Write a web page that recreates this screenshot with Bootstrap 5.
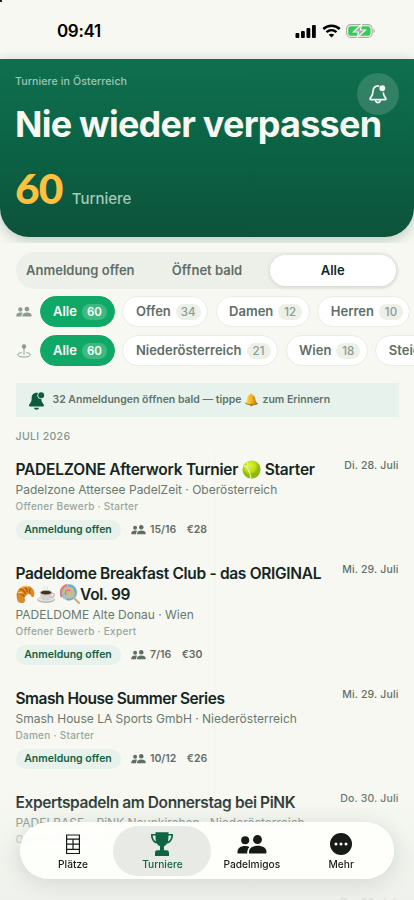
<!DOCTYPE html>
<html lang="de">
<head>
<meta charset="utf-8">
<meta name="viewport" content="width=device-width, initial-scale=1">
<title>Turniere in Österreich</title>
<link href="https://cdn.jsdelivr.net/npm/bootstrap@5.3.0/dist/css/bootstrap.min.css" rel="stylesheet">
<style>
  body { background:#f7f8f2; font-family:Inter,"Liberation Sans",sans-serif; color:#14261f; }
  .phone { width:414px; height:900px; background:#f7f8f2; }
  .corner-dot { width:2px; height:1.5px; background:#222; left:0; top:0; }
  .statusbar { height:58px; padding:4px 38px 0 57px; }
  .clock { font-size:17px; font-weight:600; color:#000; letter-spacing:-.35px; line-height:20px; }
  .hero-wrap { height:209px; margin-top:-24px; padding-top:24.5px; margin-bottom:9px; }
  .hero { height:178.5px; background:linear-gradient(#0f704e,#0b6245 52%,#0d533b); border-radius:0 0 29px 29px; box-shadow:0 3px 14px rgba(13,83,59,.27); padding:15px 15px 0; }
  .eyebrow { font-size:10.6px; line-height:16px; font-weight:500; color:#a0c6b6; letter-spacing:.1px; }
  .headline { font-size:36px; line-height:42px; font-weight:700; color:#f7f8f2; margin:13px 0 0; white-space:nowrap; letter-spacing:-.77px; }
  .hero-total { margin-top:21px; gap:9px; }
  .total { font-family:Lato,Inter,sans-serif; font-size:42.5px; line-height:44px; font-weight:900; color:#fdc13d; letter-spacing:-.8px; }
  .total-label { font-size:15px; line-height:20px; font-weight:500; color:#a6c9ba; }
  .bell-btn { width:42px; height:42px; right:15px; top:73px; background:rgba(255,255,255,.15); }
  .segments { height:37px; margin:0 15.5px; background:#edf0e9; padding:3px; font-size:13px; font-weight:600; color:#5f6e66; }
  .segments .seg { width:126px; height:31px; }
  .segments .seg:first-child { padding-right:2px; }
  .seg-active { background:#fff; color:#14261f; box-shadow:0 1px 4px rgba(20,60,40,.16); }
  .chips { height:31px; padding-left:16px; gap:7.5px; font-size:13px; font-weight:600; }
  .chips-first { margin-top:7px; }
  .chip-icon { width:16px; height:16px; color:#8c9b91; }
  .chip { height:31px; padding:0 6.5px 0 12.5px; gap:5px; background:#fff; border:1px solid #e9ece5; color:#5f6e66; white-space:nowrap; }
  .chip-on { background:#10a866; border-color:#10a866; color:#fff; padding-right:7px; }
  .count { font-size:11.5px; line-height:16px; min-width:24px; padding:0 5px; text-align:center; font-weight:500; background:#edf0e9; color:#8c9b91; }
  .chip-on .count { background:#3eb982; color:#fff; font-weight:600; }
  .notice { height:34px; margin:17px 15px 0 15.5px; padding-left:12px; background:#e7f2ec; font-size:10.5px; font-weight:600; color:#61736a; }
  .month { font-size:10.5px; line-height:14px; font-weight:500; color:#86968d; letter-spacing:.35px; margin:13px 15.5px 15px; }
  .event { padding:0 15.5px 23px; }
  .event-title { font-size:15.5px; line-height:21px; font-weight:600; color:#14261f; letter-spacing:-.4px; white-space:nowrap; margin:0 0 1px; }
  .event-title.t1 { letter-spacing:-.21px; }
  .event-title.t2 { letter-spacing:-.32px; }
  .event-title.t3 { letter-spacing:-.48px; }
  .date { font-size:10.5px; line-height:13px; font-weight:500; color:#5f6e66; letter-spacing:.15px; white-space:nowrap; }
  .place { font-size:12px; line-height:17px; color:#687970; white-space:nowrap; margin-bottom:1px; }
  .level { font-size:10px; line-height:14px; font-weight:500; color:#98a69d; letter-spacing:.27px; }
  .facts { margin-top:7px; font-size:10.5px; font-weight:600; color:#5f6e66; height:20px; }
  .facts .fee { margin-left:10.5px; }
  .state { width:105px; height:20px; line-height:20px; background:#e7f2ec; color:#135f43; text-align:center; margin-right:10.5px; font-size:10.5px; }
  .emo { vertical-align:-4px; }
  .cup { margin-left:2px; }
  .lolly { margin-left:1px; }
  .fold { width:1px; left:214px; top:450px; bottom:78px; background:rgba(20,60,40,.025); }
  .haze { left:0; right:0; bottom:0; height:110px; background:linear-gradient(rgba(246,247,242,0),rgba(238,241,235,.7) 60%,rgba(238,240,235,.86)); }
  .tabs { left:20px; top:822px; width:374px; height:57px; padding:4px; background:rgba(254,255,252,.94); box-shadow:0 4px 22px rgba(20,50,35,.13); backdrop-filter:blur(2px); }
  .tab-item { width:98px; height:50px; color:#171b18; font-size:10.2px; line-height:12px; font-weight:500; padding-top:5px; gap:1px; margin-right:-8.6px; }
  .tab-item svg { height:26px; }
  .tab-on { background:#e8eae5; color:#0d6545; }
</style>
</head>
<body>
<svg width="0" height="0" class="position-absolute" aria-hidden="true">
  <symbol id="people" viewBox="0 0 30 20">
    <circle cx="8.2" cy="5.3" r="4"/><path d="M.5 18.5V17c0-4 3.2-6 7.7-6 1.8 0 3.2.3 4.3.9-1.700 1.500-2.300 3.500-2.300 6.600z"/>
    <circle cx="20.500" cy="4.600" r="4.500"/><path d="M12 18.500V17c0-4 3.700-6.200 8.700-6.200s8.800 2.200 8.800 6.200c0 1-.4 1.500-1.300 1.500z"/>
  </symbol>
  <symbol id="bell-fill" viewBox="0 0 20 22">
    <path d="M10 2c-3.500 0-5.700 2.500-5.700 6.200 0 4.500-1 5.500-2.800 7.400-.8.900-.3 2.400 1.100 2.400h14.800c1.400 0 1.900-1.500 1.100-2.400-1.800-1.900-2.800-2.900-2.800-7.400C15.700 4.500 13.500 2 10 2z"/><path d="M7 19.500h6c-.3 1.500-1.500 2.300-3 2.300s-2.700-.8-3-2.300z"/>
    <circle cx="15.500" cy="4.800" r="4.500" fill="#e7f2ec"/><circle cx="15.500" cy="4.800" r="3.500"/>
  </symbol>
</svg>

<div class="phone position-relative overflow-hidden">
  <div class="corner-dot position-absolute"></div>
  <header class="statusbar d-flex align-items-center justify-content-between">
    <div class="clock">09:41</div>
    <div class="d-flex align-items-center">
      <svg width="22" height="13" viewBox="0 0 22 13"><rect x=".5" y="8" width="3.800" height="5" rx="1"/><rect x="6" y="6" width="3.800" height="7" rx="1"/><rect x="11.500" y="3" width="3.800" height="10" rx="1"/><rect x="17" y="0" width="3.800" height="13" rx="1"/></svg>
      <svg class="ms-1 me-1" width="21" height="14" viewBox="0 0 19 14" fill="none" stroke="#000" stroke-width="2.500"><path d="M1.300 5c4.600-4.400 11.800-4.400 16.400 0M4.500 8.200c2.900-2.700 7.100-2.700 10 0"/><path d="M9.500 13.500 6.700 10.700c1.600-1.400 4-1.400 5.600 0z" fill="#000" stroke="none"/></svg>
      <svg width="30" height="14" viewBox="0 0 30 14"><rect x=".6" y=".6" width="25.500" height="12.800" rx="4.200" fill="none" stroke="#a9aaa5" stroke-width="1.100"/><rect x="2.200" y="2.200" width="22.300" height="9.600" rx="2.900" fill="#38c95b"/><path d="M27.500 4.800c1.600.6 1.600 3.800 0 4.400z" fill="#a9aaa5"/><path d="M15.500.5 7.500 8h5l-1.300 5.500L19.500 6h-5z" fill="#a9aaa5" stroke="#f7f8f2" stroke-width="1.200"/></svg>
    </div>
  </header>

  <div class="hero-wrap overflow-hidden">
    <section class="hero">
      <div class="eyebrow">Turniere in Österreich</div>
      <h1 class="headline">Nie wieder verpassen</h1>
      <div class="hero-total d-flex align-items-baseline"><span class="total">60</span><span class="total-label">Turniere</span></div>
    </section>
  </div>
  <button class="bell-btn btn border-0 p-0 rounded-circle position-absolute d-flex align-items-center justify-content-center" aria-label="Erinnerungen">
    <svg width="20" height="20" viewBox="0 0 20 20" fill="none" stroke="#f7f8f2" stroke-width="1.700" stroke-linecap="round" stroke-linejoin="round"><path d="M10.500 1.900C7 1.900 5.200 4 5 7.200c-.2 4.300-1.300 5-2.700 7-.5.800-.2 1.400.6 1.400h14.200c.8 0 1.100-.6.600-1.400-1.100-1.500-2-2.500-2.400-5.200M7.700 17.200c.9 1.900 3.600 1.900 4.500 0"/><circle cx="14.300" cy="4.200" r="2.100" fill="#f7f8f2"/></svg>
  </button>

  <nav class="segments rounded-pill d-flex">
    <div class="seg d-flex align-items-center justify-content-center text-nowrap">Anmeldung offen</div>
    <div class="seg d-flex align-items-center justify-content-center text-nowrap">Öffnet bald</div>
    <div class="seg seg-active rounded-pill d-flex align-items-center justify-content-center">Alle</div>
  </nav>

  <div class="chips chips-first d-flex align-items-center">
    <svg class="chip-icon flex-shrink-0" fill="currentColor"><use href="#people"/></svg>
    <div class="chip chip-on rounded-pill d-flex align-items-center">Alle<span class="count rounded-pill">60</span></div>
    <div class="chip rounded-pill d-flex align-items-center">Offen<span class="count rounded-pill">34</span></div>
    <div class="chip rounded-pill d-flex align-items-center">Damen<span class="count rounded-pill">12</span></div>
    <div class="chip rounded-pill d-flex align-items-center">Herren<span class="count rounded-pill">10</span></div>
  </div>
  <div class="chips d-flex align-items-center mt-2">
    <svg class="chip-icon flex-shrink-0" viewBox="0 0 16 16" fill="none" stroke="currentColor"><circle cx="8" cy="3.500" r="2.200" fill="currentColor" stroke="none"/><path d="M8 5v6.500M5.500 9.600c-6 1-4.500 4.400 2.500 4.400s8.500-3.400 2.500-4.400"/></svg>
    <div class="chip chip-on rounded-pill d-flex align-items-center">Alle<span class="count rounded-pill">60</span></div>
    <div class="chip rounded-pill d-flex align-items-center">Niederösterreich<span class="count rounded-pill">21</span></div>
    <div class="chip rounded-pill d-flex align-items-center">Wien<span class="count rounded-pill">18</span></div>
    <div class="chip rounded-pill d-flex align-items-center">Steiermark<span class="count rounded-pill">9</span></div>
  </div>

  <div class="notice d-flex align-items-center">
    <svg class="me-2" width="17" height="19" fill="#0d5a3e"><use href="#bell-fill"/></svg>
    <span>32 Anmeldungen öffnen bald — tippe</span>
    <svg class="mx-1" width="13" height="14" viewBox="0 0 16 16"><defs><linearGradient id="gold"><stop stop-color="#ffd83e"/><stop offset=".5" stop-color="#f2b51d"/><stop offset="1" stop-color="#a76b0d"/></linearGradient></defs><path d="M6 1.500C6.500 0 9 0 9.200 1.800 13 3 12.500 7 13.500 10l2.200 2.500c-3 2-12.500 2-15.400-.5L2.700 9C3.200 5 3 2.800 6 1.500z" fill="url(#gold)"/><path d="M.3 12c3 2.500 12.400 2.500 15.400.5" stroke="#9a620c" fill="none"/><circle cx="8" cy="14" r="1.800" fill="#bd7e14"/></svg>
    <span>zum Erinnern</span>
  </div>

  <div class="month">JULI 2026</div>

  <main>
    <article class="event">
      <div class="d-flex justify-content-between align-items-start">
        <h2 class="event-title t1">PADELZONE Afterwork Turnier <svg class="emo" width="19" height="19" viewBox="0 0 20 20"><defs><radialGradient id="ball" cx=".4" cy=".3"><stop stop-color="#dff437"/><stop offset=".65" stop-color="#c0df16"/><stop offset="1" stop-color="#8eb90e"/></radialGradient></defs><circle cx="10" cy="10" r="9.500" fill="url(#ball)"/><path d="M1.500 6c3 0 6 3 8 13M5 2.500c1 1 1.500 1.500 1 4.500" fill="none" stroke="#f1f8c9" stroke-width="1.200"/></svg> Starter</h2>
        <div class="date">Di. 28. Juli</div>
      </div>
      <div class="place">Padelzone Attersee PadelZeit · Oberösterreich</div>
      <div class="level">Offener Bewerb · Starter</div>
      <div class="facts d-flex align-items-center"><span class="state rounded-pill">Anmeldung offen</span><svg class="me-1" width="15" height="10" fill="currentColor"><use href="#people"/></svg><span>15/16</span><span class="fee">€28</span></div>
    </article>

    <article class="event">
      <div class="d-flex justify-content-between align-items-start">
        <h2 class="event-title t2">Padeldome Breakfast Club - das ORIGINAL<br><svg class="emo" width="19" height="20" viewBox="0 0 20 20"><path d="M2 18C-1 12 1 4 7 2c7-2.500 14 3 12 10-1 2-3 1.500-3.500-1-1.500-2-4-1-4.500.5-2 1-2.500 2.500-1.500 4.500C10 20 4 20.500 2 18z" fill="#dc8a26"/><path d="M4 5c3 0 5 2 6 5M9 2c2 2 3 4 3 6M15 4c-1 2-1 4 0 6M1 10c3-1 6 0 8 3" stroke="#a9560f" fill="none" stroke-width="1.100"/><path d="M5 4c2-2 5-2.500 8-1.500M2 9c2-1 4-.5 5 0" stroke="#ffc45d" fill="none" stroke-width="1.400"/></svg><svg class="emo cup" width="19" height="19" viewBox="0 0 20 20"><ellipse cx="9.500" cy="15.500" rx="9.300" ry="3.500" fill="#b9b9b7"/><ellipse cx="9.500" cy="14.700" rx="8.500" ry="2.600" fill="#e2e2e0"/><path d="M3.500 8h12v3c0 7-12 7-12 0z" fill="#d2d2d0"/><path d="M15.500 9c4-1 3.500 4-1 4" fill="none" stroke="#bcbcba" stroke-width="1.300"/><ellipse cx="9.500" cy="8" rx="6" ry="2.500" fill="#4b2c20" stroke="#c9c9c6"/><path d="M8 5c-2-2 1-2 0-4M11 5c-1-2 1-2 0-4" fill="none" stroke="#ddd"/></svg> <svg class="emo lolly" width="20" height="20" viewBox="0 0 20 20"><path d="m14 14 5 5" stroke="#d7a47a" stroke-width="2" stroke-linecap="round"/><circle cx="9" cy="8.500" r="8.300" fill="#8acbd8"/><path d="M2 13a8 8 0 0 1 5-12" fill="none" stroke="#e97979" stroke-width="2.200"/><path d="M8 1.500c5-.5 8 3 7.500 7.500s-5 7-8.500 6" fill="none" stroke="#70a7dd" stroke-width="2"/><path d="M4 10c-1-5 6-8 9-3s-2 8-5 6-2-6 1-5.500 2 3 .5 3" fill="none" stroke="#f0b457" stroke-width="1.700"/><path d="M6 11c-2-4 2-6 4.500-4" fill="none" stroke="#db6eaa" stroke-width="1.300"/></svg><span>Vol. 99</span></h2>
        <div class="date">Mi. 29. Juli</div>
      </div>
      <div class="place">PADELDOME Alte Donau · Wien</div>
      <div class="level">Offener Bewerb · Expert</div>
      <div class="facts d-flex align-items-center"><span class="state rounded-pill">Anmeldung offen</span><svg class="me-1" width="15" height="10" fill="currentColor"><use href="#people"/></svg><span>7/16</span><span class="fee">€30</span></div>
    </article>

    <article class="event">
      <div class="d-flex justify-content-between align-items-start">
        <h2 class="event-title t3">Smash House Summer Series</h2>
        <div class="date">Mi. 29. Juli</div>
      </div>
      <div class="place">Smash House LA Sports GmbH · Niederösterreich</div>
      <div class="level">Damen · Starter</div>
      <div class="facts d-flex align-items-center"><span class="state rounded-pill">Anmeldung offen</span><svg class="me-1" width="15" height="10" fill="currentColor"><use href="#people"/></svg><span>10/12</span><span class="fee">€26</span></div>
    </article>

    <article class="event">
      <div class="d-flex justify-content-between align-items-start">
        <h2 class="event-title">Expertspadeln am Donnerstag bei PiNK</h2>
        <div class="date">Do. 30. Juli</div>
      </div>
      <div class="place">PADELBASE - PiNK Neunkirchen · Niederösterreich</div>
      <div class="level">Offener Bewerb · Expert</div>
      <div class="facts d-flex align-items-center"><span class="state rounded-pill"></span></div>
    </article>
    <article class="event"><div class="date text-end">Do. 30. Juli</div></article>
  </main>

  <div class="fold position-absolute"></div>
  <div class="haze position-absolute"></div>
  <nav class="tabs rounded-pill position-absolute d-flex">
    <div class="tab-item d-flex flex-column align-items-center"><svg width="26" viewBox="0 0 26 26" fill="none" stroke="currentColor" stroke-width="1.200"><path d="M6.600 4h12.800v18.500H6.600zM6.600 8.100h12.800M6.600 13.200h12.800M6.600 18.400h12.800M13 8.100v10.300"/></svg>Plätze</div>
    <div class="tab-item tab-on rounded-pill d-flex flex-column align-items-center"><svg width="26" viewBox="0 0 26 26" fill="currentColor"><path d="M6.500 1.200h13v1.700h4.500c.2 5-1.800 8.700-6 9.700-.8 1.500-1.800 2.300-3 2.700v4h2.700c1.400 0 2.300 1 2.300 2.700V25H6v-3c0-1.700.9-2.700 2.300-2.700H11v-4c-1.200-.4-2.200-1.200-3-2.700-4.200-1-6.200-4.700-6-9.700h4.500zm0 3.300H3.700c.2 3 1.200 5.100 3.300 5.900-.3-1.500-.5-3.700-.5-5.900zm13 0c0 2.200-.2 4.400-.5 5.900 2.100-.8 3.100-2.900 3.300-5.900z"/></svg>Turniere</div>
    <div class="tab-item d-flex flex-column align-items-center"><svg width="30" viewBox="0 0 30 26" fill="currentColor"><use href="#people" y="4" width="30" height="20"/></svg>Padelmigos</div>
    <div class="tab-item d-flex flex-column align-items-center"><svg width="26" viewBox="0 0 26 26"><circle cx="13" cy="13" r="11" fill="currentColor"/><g fill="#fff"><circle cx="8" cy="13" r="1.500"/><circle cx="13" cy="13" r="1.500"/><circle cx="18" cy="13" r="1.500"/></g></svg>Mehr</div>
  </nav>
</div>
<script src="https://cdn.jsdelivr.net/npm/bootstrap@5.3.0/dist/js/bootstrap.bundle.min.js"></script>
</body>
</html>
